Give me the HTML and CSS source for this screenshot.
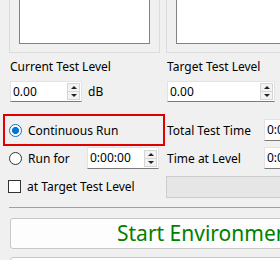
FILE: index.html
```html
<!DOCTYPE html>
<html>
<head>
<meta charset="utf-8">
<link rel="stylesheet" href="styles.css">
</head>
<body>
<div class="frames">
  <div class="frame frame-left"><div class="plot"></div></div>
  <div class="frame frame-right"><div class="plot"></div></div>
</div>

<div class="levels">
  <div class="col">
    <div class="label">Current Test Level</div>
    <div class="spinrow">
      <div class="spin spin-left"><span class="val">0.00</span><span class="arrows"><span class="up"></span><span class="down"></span></span></div>
      <span class="unit">dB</span>
    </div>
  </div>
  <div class="col">
    <div class="label">Target Test Level</div>
    <div class="spin spin-right"><span class="val">0.00</span><span class="arrows"><span class="up"></span><span class="down"></span></span></div>
  </div>
</div>

<div class="options">
  <div class="opt-left">
    <div class="row row-highlight">
      <span class="radio checked"></span><span class="text">Continuous Run</span>
    </div>
    <div class="row">
      <span class="radio"></span><span class="text runfor">Run for</span>
      <div class="spin spin-time"><span class="val">0:00:00</span><span class="arrows"><span class="up"></span><span class="down"></span></span></div>
    </div>
    <div class="row">
      <span class="check"></span><span class="text">at Target Test Level</span>
    </div>
  </div>
  <div class="opt-right">
    <div class="rrow rrow-first"><span class="text rlabel">Total Test Time</span><div class="edit">0:00:00</div></div>
    <div class="rrow"><span class="text rlabel">Time at Level</span><div class="edit">0:00:00</div></div>
    <div class="rrow"><div class="disabled-box"></div></div>
  </div>
</div>

<div class="sep"></div>

<div class="btn btn-start">Start Environment</div>
<div class="btn btn-next"></div>
</body>
</html>
```

FILE: styles.css
```css
html, body {
  margin: 0;
  padding: 0;
  background: #f0f0f0;
  width: 280px;
  height: 260px;
  overflow: hidden;
  font-family: "Noto Sans", "Open Sans", sans-serif;
  font-size: 12px;
  color: #000;
}

.frames {
  display: flex;
  gap: 6px;
  padding-left: 9px;
  margin-top: -11px;
}
.frame {
  border: 1px solid #dcdcdc;
  border-top: none;
  padding: 0 9px 8px 9px;
  height: 64px;
  box-sizing: border-box;
  display: flex;
}
.frame-left { width: 151px; flex: none; }
.frame-right { width: 200px; flex: none; }
.plot {
  flex: 1;
  background: #fff;
  border: 1px solid #838383;
}

.levels {
  display: flex;
  padding-left: 10px;
  margin-top: 6px;
}
.levels .col { display: flex; flex-direction: column; }
.levels .col:first-child { width: 157px; }
.label {
  height: 16px;
  line-height: 16px;
  white-space: nowrap;
}
.spinrow { display: flex; align-items: center; }
.spin {
  margin-top: 6px;
  height: 21px;
  box-sizing: border-box;
  background: #fff;
  border: 1px solid #e3e3e3;
  border-bottom: 1px solid #7a7a7a;
  display: flex;
  align-items: center;
  justify-content: space-between;
  padding-left: 2px;
}
.spin .val { line-height: 18px; }
.spin-left { width: 72px; }
.spin-right { width: 108px; }
.unit { margin-top: 6px; margin-left: 6px; }
.arrows {
  display: flex;
  flex-direction: column;
  width: 13px;
  height: 17px;
  margin-right: 1px;
  border: 1px solid #d5d5d5;
  box-sizing: border-box;
  background: #f3f3f3;
}
.arrows span {
  flex: 1;
  position: relative;
}
.arrows .up { border-bottom: 1px solid #d5d5d5; }
.arrows .up::after, .arrows .down::after {
  content: "";
  position: absolute;
  left: 3px;
  border-left: 3px solid transparent;
  border-right: 3px solid transparent;
}
.arrows .up::after { top: 2px; border-bottom: 3px solid #222; }
.arrows .down::after { top: 2px; border-top: 3px solid #222; }

.options {
  display: flex;
  margin-top: 12px;
}
.opt-left {
  width: 166px;
  flex: none;
  display: flex;
  flex-direction: column;
}
.row {
  display: flex;
  align-items: center;
  height: 28px;
  padding-left: 9px;
}
.row-highlight {
  margin-left: 3px;
  width: 162px;
  height: 32px;
  box-sizing: border-box;
  border: 2px solid #e00000;
  padding-left: 4px;
  margin-bottom: -2px;
}
.radio {
  width: 13px;
  height: 13px;
  box-sizing: border-box;
  border-radius: 50%;
  border: 1px solid #333;
  background: #fff;
  flex: none;
}
.radio.checked {
  border-color: #0078d7;
  background: radial-gradient(circle, #0078d7 0 3.3px, #fff 3.8px);
}
.check {
  width: 13px;
  height: 13px;
  box-sizing: border-box;
  border: 1px solid #333;
  background: #fff;
  flex: none;
  margin-left: -1px;
}
.text { margin-left: 6px; white-space: nowrap; }
.runfor { width: 59px; }
.spin-time { margin-top: 0; width: 72px; height: 22px; }

.opt-right {
  display: flex;
  flex-direction: column;
  padding-top: 4px;
}
.rrow {
  display: flex;
  align-items: center;
  height: 28px;
}
.rrow-first { height: 24px; margin-bottom: 2px; }
.rlabel { margin-left: 1px; width: 97px; }
.edit {
  height: 22px;
  box-sizing: border-box;
  background: #fff;
  border: 1px solid #e3e3e3;
  border-bottom: 1px solid #7a7a7a;
  padding-left: 2px;
  line-height: 20px;
  width: 80px;
}
.disabled-box {
  margin-top: 2px;
  width: 140px;
  height: 22px;
  background: #e6e6e6;
  border: 1px solid #cccccc;
  box-sizing: border-box;
}

.sep {
  margin: 7px 0 0 9px;
  height: 1px;
  background: #a0a0a0;
}

.btn {
  margin-left: 10px;
  width: 500px;
  box-sizing: border-box;
  background: #fdfdfd;
  border: 1px solid #c8c8c8;
  border-radius: 3px;
}
.btn-start {
  margin-top: 10px;
  height: 31px;
  line-height: 29px;
  font-size: 21px;
  color: #008000;
  padding-left: 106px;
  white-space: nowrap;
}
.btn-next {
  margin-top: 8px;
  height: 30px;
}
```
